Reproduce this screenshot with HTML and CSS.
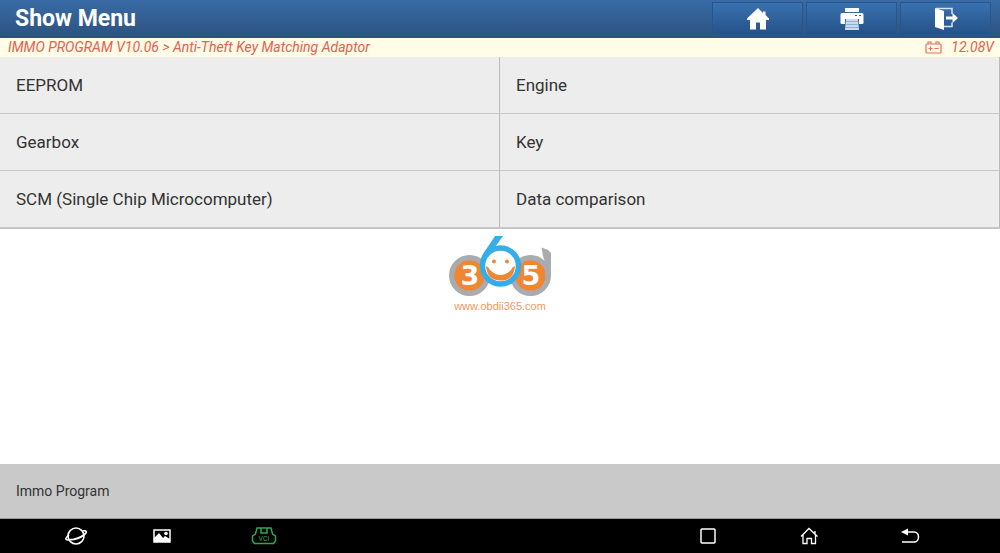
FILE: index.html
```html
<!DOCTYPE html>
<html lang="en">
<head>
    <meta charset="UTF-8">
    <meta name="viewport" content="width=device-width, initial-scale=1.0">
    <title>Show Menu</title>
    <link rel="stylesheet" href="styles.css">
</head>
<body>
    <header class="title-bar">
        <h1>Show Menu</h1>
        <div class="tools">
            <button type="button" class="tool" aria-label="Home">
                <svg width="24" height="24" viewBox="0 0 24 24" fill="#fff">
                    <path d="M12 1L1 11.500V13H4V22.500H10V15.500H14V22.500H20V13H23V11.500L19.500 8V4.500H17V6Z"/>
                </svg>
            </button>
            <button type="button" class="tool" aria-label="Print">
                <svg width="24" height="24" viewBox="0 0 24 24">
                    <path fill="#fff" d="M5 1H19V5H5ZM2 6H22Q23.500 6 23.500 7.500V16Q23.500 17 22 17H19V12H5V17H2Q.5 17 .5 16V7.500Q.5 6 2 6Z"/>
                    <path fill="#c9daec" d="M6 12H18L19 23H5Z"/>
                    <path stroke="#8fb0d2" d="M6 14.500H18M6 17.500H18M5 20.500H19"/>
                    <path stroke="#2f609a" d="M15 8.500H17M19 8.500H21"/>
                </svg>
            </button>
            <button type="button" class="tool" aria-label="Exit">
                <svg width="24" height="24" viewBox="0 0 24 24">
                    <path fill="#fff" d="M1 1L10 4V23L1 20Z"/>
                    <path fill="none" stroke="#d5e2f0" stroke-width="1.500" d="M2 1.500H18V7M18 15.500V19.500H10"/>
                    <path fill="#fff" d="M12 9.500H18.500V6L24 11L18.500 16V12.500H12Z"/>
                </svg>
            </button>
        </div>
    </header>

    <div class="path-bar">
        <span>IMMO PROGRAM V10.06 &gt; Anti-Theft Key Matching Adaptor</span>
        <span class="voltage">
            <svg width="17" height="13" viewBox="0 0 17 13" fill="none" stroke="#e5715c" stroke-width="1.200">
                <rect x="1" y="3" width="15" height="9" rx="1"/>
                <path d="M3 3V1H6V3M11 3V1H14V3M3.500 7.500H7.500M5.500 5.500V9.500M9.500 7.500H13.500"/>
            </svg>
            12.08V
        </span>
    </div>

    <main class="content">
        <div class="menu">
            <button type="button" class="menu-item">EEPROM</button>
            <button type="button" class="menu-item">Engine</button>
            <button type="button" class="menu-item">Gearbox</button>
            <button type="button" class="menu-item">Key</button>
            <button type="button" class="menu-item">SCM (Single Chip Microcomputer)</button>
            <button type="button" class="menu-item">Data comparison</button>
        </div>
        <div class="logo">
            <svg width="102" height="61" viewBox="0 0 102 61">
                <circle cx="20.500" cy="39.500" r="17.800" fill="#f08532" stroke="#aaabad" stroke-width="5.400"/>
                <circle cx="81.500" cy="39.500" r="17.800" fill="#f08532" stroke="#aaabad" stroke-width="5.400"/>
                <path fill="#aaabad" d="M92.500 11.500L99 14L102 17V40L96 42V26L94 20Z"/>
                <text class="digit" x="21" y="49">3</text>
                <text class="digit" x="82" y="49">5</text>
                <path fill="#35aee8" d="M46 0H54L44 14L34 30H31Q30.500 22 36 15Z"/>
                <circle cx="51.500" cy="30" r="18" fill="#fff" stroke="#35aee8" stroke-width="5.400"/>
                <path fill="#f08532" d="M37 30Q40 31 41 34Q51.500 44 62 34Q63 31 66 30Q65 44.500 51.500 44.500T37 30Z"/>
                <circle cx="45" cy="25.500" r="1.900" fill="#f08532"/>
                <circle cx="58" cy="25.500" r="1.900" fill="#f08532"/>
            </svg>
            <span>www.obdii365.com</span>
        </div>
    </main>

    <footer class="status">Immo Program</footer>

    <nav class="system-bar">
        <div class="apps">
            <button type="button" aria-label="Browser">
                <svg width="24" height="20" viewBox="0 0 24 20" fill="none" stroke="#fff" stroke-width="1.600">
                    <circle cx="12" cy="10" r="8"/>
                    <path d="M5 9C1 12 1 14 4 14C10 14 20 10 22 7C23 5 21 4.500 18.500 5M5 13.500C11 14 16 12 20 9"/>
                </svg>
            </button>
            <button type="button" aria-label="Gallery">
                <svg width="24" height="20" viewBox="0 0 24 20">
                    <rect x="4" y="4" width="16" height="12" fill="none" stroke="#fff" stroke-width="1.500"/>
                    <path fill="#fff" d="M4 12L9 7L13 12L15 10L20 13V16H4Z"/>
                    <circle cx="16" cy="7.500" r="1.800" fill="#fff"/>
                </svg>
            </button>
            <button type="button" aria-label="VCI connection">
                <svg width="26" height="20" viewBox="0 0 26 20" fill="none" stroke="#2fa84a" stroke-width="1.500">
                    <path d="M6 2H20L21.500 8L24.500 10V15L22.500 17.500H3.500L1.500 15V10L4.500 8ZM10 2V7H16V2"/>
                    <text class="vci" x="13" y="15">VCI</text>
                </svg>
            </button>
        </div>
        <div class="keys">
            <button type="button" aria-label="Recent apps">
                <svg width="24" height="20" viewBox="0 0 24 20" fill="none" stroke="#fff" stroke-width="1.500">
                    <rect x="5" y="3" width="14" height="14" rx="1"/>
                </svg>
            </button>
            <button type="button" aria-label="Home screen">
                <svg width="24" height="20" viewBox="0 0 24 20" fill="none" stroke="#fff" stroke-width="1.300">
                    <path d="M4 10.500L12 2.500L20.500 10.500M18 5V8M6 9V17.500H10V12.500H14.500V17.500H18.500V9"/>
                </svg>
            </button>
            <button type="button" aria-label="Back">
                <svg width="24" height="20" viewBox="0 0 24 20" fill="none" stroke="#fff" stroke-width="1.500">
                    <path d="M8 6H16C22 6 22 16 16 16H4"/>
                    <path fill="#fff" stroke="none" d="M3 6L10 2.500V9.500Z"/>
                </svg>
            </button>
        </div>
    </nav>
</body>
</html>
```
FILE: styles.css
```css
* {
    box-sizing: border-box;
}
body {
    display: flex;
    flex-direction: column;
    min-height: 100vh;
    margin: 0;
    font-family: Roboto, Arial, sans-serif;
    color: #333;
    background-color: #fff;
}
button {
    padding: 0;
    border: none;
    background: none;
    font: inherit;
    color: inherit;
    cursor: pointer;
}
svg {
    display: block;
}
.title-bar {
    display: flex;
    justify-content: space-between;
    height: 38px;
    padding: 0 9px 0 15px;
    background: linear-gradient(#396ba6, #2c527f);
}
h1 {
    margin: 0;
    font-size: 23px;
    line-height: 38px;
    color: #fff;
}
.tools {
    display: flex;
    gap: 3px;
    padding: 2px 0 3px;
}
.tool {
    display: flex;
    align-items: center;
    justify-content: center;
    width: 91px;
    border: 1px solid #28568c;
    background: linear-gradient(#3871b0, #265288);
}
.path-bar {
    display: flex;
    justify-content: space-between;
    padding: 0 6px 0 8px;
    font-size: 14px;
    font-style: italic;
    line-height: 19px;
    color: #e5604d;
    background-color: #fffce8;
}
.voltage {
    display: flex;
    align-items: center;
    gap: 9px;
}
.content {
    flex: 1;
}
.menu {
    display: grid;
    grid-template-columns: 1fr 1fr;
    border-bottom: 1px solid #c4c4c4;
}
.menu-item {
    height: 57px;
    padding: 0 16px;
    border-right: 1px solid #bbb;
    border-bottom: 1px solid #c8c8c8;
    font-size: 17px;
    text-align: left;
    background-color: #ededed;
}
.logo {
    display: flex;
    flex-direction: column;
    align-items: center;
    gap: 3px;
    padding-top: 7px;
    font-family: "Liberation Sans", Arial, sans-serif;
    font-size: 11px;
    line-height: 13px;
    color: #f2985a;
}
.digit {
    font-family: "DejaVu Sans", sans-serif;
    font-size: 27px;
    font-weight: bold;
    text-anchor: middle;
    fill: #fff;
}
.status {
    padding: 1px 16px 0;
    border-bottom: 1px solid #999;
    font-size: 14px;
    line-height: 53px;
    background-color: #c9c9c9;
}
.system-bar {
    display: flex;
    align-items: center;
    justify-content: space-between;
    height: 34px;
    padding: 0 78px 0 64px;
    background-color: #000;
}
.apps {
    display: grid;
    grid-template-columns: 86px 101px auto;
}
.keys {
    display: flex;
    gap: 77px;
}
.vci {
    font-size: 7px;
    text-anchor: middle;
    fill: #2fa84a;
    stroke: none;
}
```
